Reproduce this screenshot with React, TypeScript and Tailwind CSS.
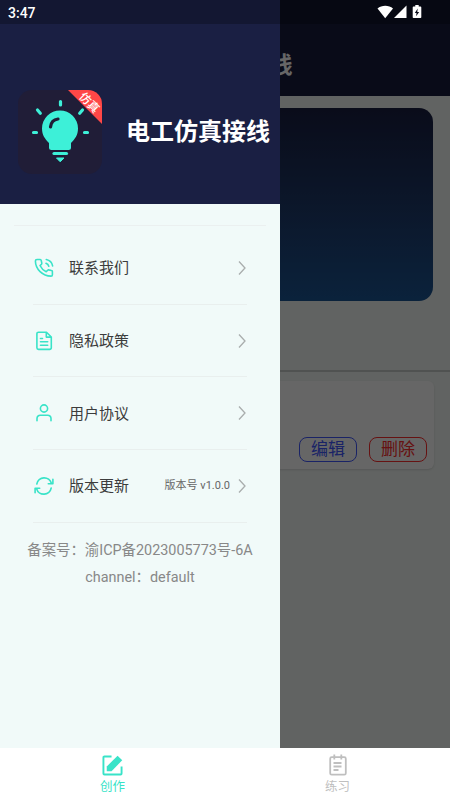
import type { ReactNode } from 'react';

type MenuItem = {
  label: string;
  icon: ReactNode;
  extra?: string;
};

const iconProps = {
  viewBox: '0 0 20 20',
  fill: 'none',
  stroke: '#39e3c8',
  strokeWidth: 1.6,
  strokeLinecap: 'round' as const,
  strokeLinejoin: 'round' as const,
  className: 'h-5 w-5',
};

const menuItems: MenuItem[] = [
  {
    label: '联系我们',
    icon: (
      <svg {...iconProps}>
        <path d="M3 1.5h3.2c.6 0 .9.4 1 .9l.6 2.8c.1.5 0 .8-.4 1.1L6 7.5c1.3 2.8 3.4 4.9 6.2 6.2l1.500-1.500c.3-.3.7-.4 1.100-.3l2.700.6c.6.1.9.5.9 1v3.200c0 .9-.6 1.400-1.400 1.400C8.600 18.100 1.500 11.200 1.400 3c0-.9.6-1.500 1.600-1.500Z" />
        <path d="M12 5.300a4.600 4.600 0 0 1 2.800 3M12.300 1.500a8 8 0 0 1 6.300 6.400" />
      </svg>
    ),
  },
  {
    label: '隐私政策',
    icon: (
      <svg {...iconProps}>
        <path d="M12.500 1.200H4.500a1.600 1.600 0 0 0-1.600 1.600v14a1.600 1.600 0 0 0 1.600 1.600h11.200a1.600 1.600 0 0 0 1.600-1.600V6ZM12.300 1.500v4.600h4.800M6.500 7.500h2M6.500 10.800h7.200M6.500 14.200h7.200" />
      </svg>
    ),
  },
  {
    label: '用户协议',
    icon: (
      <svg {...iconProps}>
        <circle cx="10" cy="5.500" r="3.600" />
        <path d="M3 17.700v-2.300a3.200 3.200 0 0 1 3.200-3.200h7.600a3.200 3.200 0 0 1 3.200 3.200v2.300" />
      </svg>
    ),
  },
  {
    label: '版本更新',
    extra: '版本号 v1.0.0',
    icon: (
      <svg {...iconProps}>
        <path d="M2.800 8A7.500 7.500 0 0 1 17.400 7.300M18.900 3.300v4.500h-4.600M17.200 12A7.500 7.500 0 0 1 2.600 12.700M1.100 16.700v-4.500h4.600" />
      </svg>
    ),
  },
];

const AppLogo = () => (
  <svg viewBox="0 0 84 84" className="h-[84px] w-[84px] shrink-0 overflow-visible">
    <rect width="84" height="84" rx="14" fill="#201d37" />
    <path d="M50 0h20a14 14 0 0 1 14 14v20Z" fill="#ff4747" />
    <text
      x="71.500"
      y="16.700"
      fill="#fff"
      fontSize="11.500"
      fontWeight="500"
      textAnchor="middle"
      transform="rotate(45 71.500 12.500)"
      className="font-['Noto_Sans_CJK_SC',sans-serif]"
    >
      仿真
    </text>
    <g stroke="#3df0d8" strokeWidth="3.200" strokeLinecap="round">
      <path d="M42.500 11.500v3.500M19.500 20l2.800 3.200M64.500 20l-2.800 3.200M15.500 42.500h3M66.500 42.500h3" />
    </g>
    <path
      d="M42 20.500a18 18 0 0 0-18 18c0 6.500 3 10.500 7 14.500v4.500a2.500 2.500 0 0 0 2.500 2.500h17a2.500 2.500 0 0 0 2.500-2.500v-4.500c4-4 7-8 7-14.500a18 18 0 0 0-18-18Z"
      fill="#3df0d8"
    />
    <path d="M32.500 37c.5-4.500 3.500-7.500 7.500-8" fill="none" stroke="#201d37" strokeWidth="3.200" strokeLinecap="round" />
    <path d="M36 63.500h12.500" stroke="#3df0d8" strokeWidth="3.200" strokeLinecap="round" />
    <path d="M38.500 68h7.500l-3.800 3.800Z" fill="#3df0d8" stroke="#3df0d8" strokeLinejoin="round" />
  </svg>
);

const StatusBar = () => (
  <div className="absolute inset-x-0 top-0 flex h-6 items-center justify-between bg-black/25 pr-[27px] pl-2">
    <span className="pt-0.5 text-sm leading-6 font-medium text-white">3:47</span>
    <svg viewBox="0 0 46 14" className="h-3.5 w-[46px]" fill="#fff">
      <path d="M.5 3.500C4.500-.1 12-.1 16 3.500L8.200 13.200Z" />
      <path d="M29.500 0.500v12.500H17Z" />
      <path d="M36.500 1.500h1.800V0h3.400v1.500h1.800c.5 0 .8.4.8.9v9.800c0 .5-.3.8-.8.8h-7c-.5 0-.8-.3-.8-.8V2.400c0-.5.3-.9.8-.9Z" />
      <path d="M40.700 3.500 37.800 8h1.700l-.4 3.300L42.200 7h-1.900Z" fill="#0a0c1a" />
    </svg>
  </div>
);

const HomePage = () => (
  <div className="flex h-full flex-col bg-[#f3f8f5]">
    <header className="flex h-24 items-center justify-center bg-[#181c3c] pt-[36px]">
      <h1 className="text-[22.500px] font-bold text-white">电工仿真接线</h1>
    </header>
    <div className="mt-3 mr-[17px] ml-4 h-[193px] rounded-[14px] bg-linear-to-b from-[#191f42] to-[#1b5695]" />
    <div className="mt-[69px] h-[2px] bg-[#c8cccb]" />
    <div className="mx-4 mt-[9px] flex h-[88px] items-end justify-end gap-3 rounded-md bg-white pr-[7px] pb-[7px] text-[17px] shadow-sm">
      <button className="flex h-[25px] w-[58px] items-center justify-center rounded-lg border border-[#4259ff] text-[#4259ff]">
        编辑
      </button>
      <button className="flex h-[25px] w-[58px] items-center justify-center rounded-lg border border-[#ff2d2d] text-[#ff2d2d]">
        删除
      </button>
    </div>
  </div>
);

const Drawer = () => (
  <aside className="absolute inset-y-0 left-0 flex w-[280px] flex-col bg-[#f1faf9]">
    <div className="flex h-[204px] items-center bg-[#1a1f43] pt-[59px] pl-[18px]">
      <AppLogo />
      <h2 className="ml-6 whitespace-nowrap text-[24px] font-bold text-white">电工仿真接线</h2>
    </div>
    <div className="mx-[14px] mt-[21px] h-px bg-[#ebf0f0]" />
    <ul className="mx-[33px] mt-[6px]">
      {menuItems.map((item) => (
        <li key={item.label} className="flex h-[72.700px] items-center border-b border-[#e9efee]">
          <span className="ml-px">{item.icon}</span>
          <span className="ml-[15px] pt-[1.500px] text-[15px] text-[#3c3c3c]">{item.label}</span>
          <span className="ml-auto pt-px text-[11px] text-[#666]">{item.extra}</span>
          <svg viewBox="0 0 8 14" className="mr-px ml-2 h-3.5 w-2" fill="none" stroke="#a9adad" strokeWidth="1.300">
            <path d="m1 .5 6 6.500-6 6.500" />
          </svg>
        </li>
      ))}
    </ul>
    <div className="mt-[14px] text-center text-[14.400px] leading-[27px] whitespace-nowrap text-[#888]">
      <p>备案号：渝ICP备2023005773号-6A</p>
      <p>channel：default</p>
    </div>
  </aside>
);

const TabBar = () => (
  <nav className="grid h-[51px] grid-cols-2 bg-white text-[12.500px] leading-4">
    <div className="flex flex-col items-center pt-[7px] text-[#39e3c8]">
      <svg viewBox="0 0 22 22" className="h-[21px] w-[21px]" fill="none" stroke="currentColor" strokeWidth="2">
        <path d="M10 1.500H2.500a1 1 0 0 0-1 1v17a1 1 0 0 0 1 1h17a1 1 0 0 0 1-1V12" />
        <path d="M5 17v-5L16.300.800 21.200 5.500 10 17Z" fill="currentColor" stroke="none" />
      </svg>
      <span className="mt-[3px]">创作</span>
    </div>
    <div className="flex flex-col items-center pt-[6px] text-[#bfbfbf]">
      <svg viewBox="0 0 22 22" className="h-[22px] w-[22px]" fill="none" stroke="currentColor" strokeWidth="1.800">
        <rect x="3.200" y="3.200" width="15.600" height="17.500" rx="1.500" />
        <path d="M7.300.5v5M14.300.5v5M6.500 9h8M6.500 12.500h8M6.500 16h5" />
      </svg>
      <span className="mt-[3px]">练习</span>
    </div>
  </nav>
);

const App = () => {
  return (
    <div className="flex h-[799px] w-[450px] flex-col overflow-hidden font-[Roboto,'Noto_Sans_CJK_SC',sans-serif]">
      <main className="relative h-[748px]">
        <HomePage />
        <div className="absolute inset-0 bg-black/60" />
        <Drawer />
        <StatusBar />
      </main>
      <TabBar />
    </div>
  );
};

export default App;
